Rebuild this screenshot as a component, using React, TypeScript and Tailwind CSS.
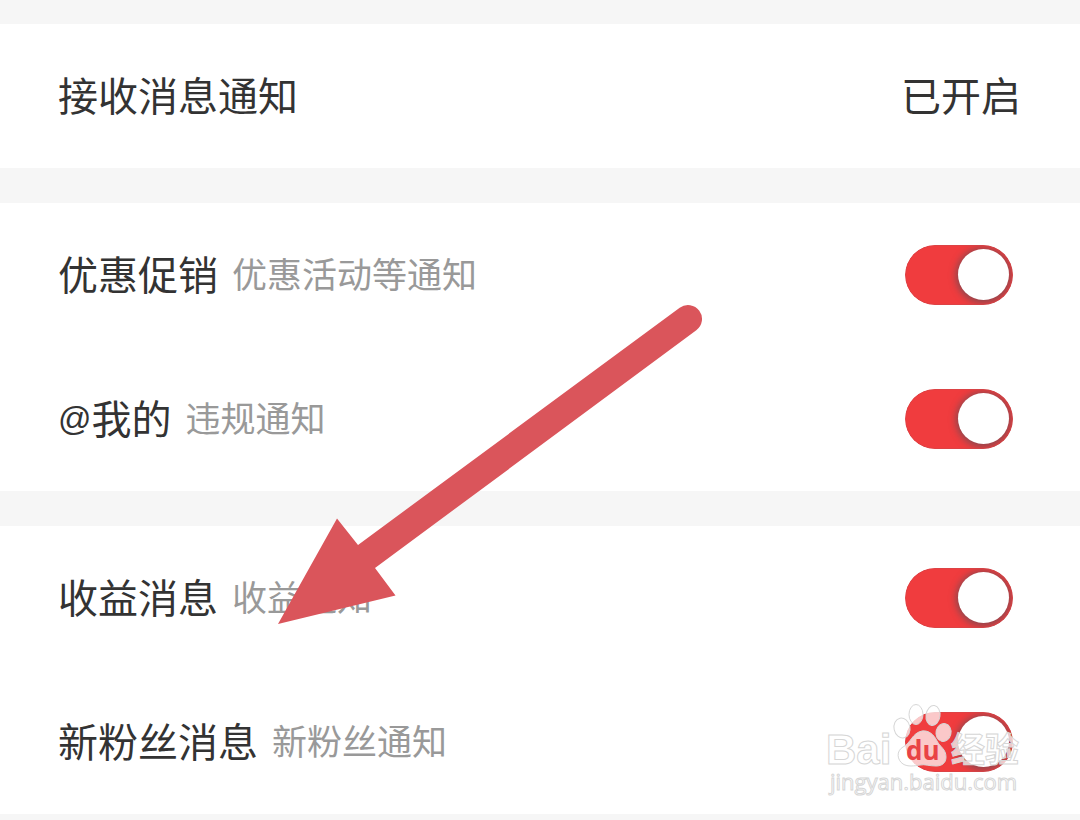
import { useState } from 'react';

interface NotificationItem {
  id: string;
  prefix?: string;
  title: string;
  description: string;
}

const groups: NotificationItem[][] = [
  [
    { id: 'promotion', title: '优惠促销', description: '优惠活动等通知' },
    { id: 'mention', prefix: '@', title: '我的', description: '违规通知' },
  ],
  [
    { id: 'income', title: '收益消息', description: '收益通知' },
    { id: 'fans', title: '新粉丝消息', description: '新粉丝通知' },
  ],
];

interface ToggleProps {
  id: string;
  checked: boolean;
  onChange: (checked: boolean) => void;
}

function Toggle({ id, checked, onChange }: ToggleProps) {
  return (
    <span className="relative mr-2 inline-flex h-[60px] w-[108px] shrink-0 overflow-hidden rounded-full">
      <input
        type="checkbox"
        id={id}
        checked={checked}
        onChange={(e) => onChange(e.target.checked)}
        className="peer h-full w-full cursor-pointer appearance-none rounded-full bg-gray-300 checked:bg-[#f03c3e]"
      />
      <span className="pointer-events-none absolute top-1 left-[5px] size-[51px] rounded-full bg-white shadow-[0_1px_7px_2px_rgba(70,80,90,0.6)] transition-transform peer-checked:translate-x-12" />
      <span className="pointer-events-none absolute inset-0 rounded-full border border-[#d0484b]/60" />
    </span>
  );
}

function Arrow() {
  return (
    <svg
      className="pointer-events-none absolute top-[304px] left-[278px]"
      width="426"
      height="322"
      viewBox="0 0 426 322"
      aria-hidden="true"
    >
      <path
        d="M0 320 L59 214.5 L80 241 L401.7 3.7 A14 14 0 0 1 418.3 26.3 L97 264 L117.5 291.5 Z"
        fill="#da555b"
      />
    </svg>
  );
}

function Watermark() {
  return (
    <svg
      className="pointer-events-none absolute top-[700px] right-[52px]"
      width="204"
      height="100"
      viewBox="0 0 204 100"
      aria-hidden="true"
    >
      <g fill="#ffffff" fillOpacity="0.72" stroke="#d6d6d6" strokeWidth="1">
        <ellipse cx="78" cy="28" rx="8" ry="10" transform="rotate(-12 78 28)" />
        <ellipse cx="92" cy="14.5" rx="7" ry="10" />
        <ellipse cx="109" cy="15.5" rx="7" ry="10" transform="rotate(8 109 15.5)" />
        <ellipse cx="119.5" cy="32.5" rx="7.5" ry="9" transform="rotate(12 119.5 32.5)" />
        <path d="M98 31 C105 30 110 35 113 41 C116 47 122 49 122 57 C122 63 118 66 112 66 C105 66 101 64 96 65 C90 66 84 67 79 64 C73 60 72 51 79 47 C87 43 88 33 98 31 Z" />
        <text x="2" y="64" className="font-['Liberation_Sans',sans-serif] text-[42px] font-bold">
          Bai
        </text>
        <text x="127" y="62" className="font-['Noto_Sans_CJK_SC',sans-serif] text-[34px] font-bold">
          经验
        </text>
        <text x="6" y="90" className="font-['Open_Sans',sans-serif] text-[22px]">
          jingyan.baidu.com
        </text>
      </g>
      <text x="82" y="60" fill="#e94245" className="font-['Open_Sans',sans-serif] text-[26px] font-bold">
        du
      </text>
    </svg>
  );
}

export default function App() {
  const [enabled, setEnabled] = useState<Record<string, boolean>>({
    promotion: true,
    mention: true,
    income: true,
    fans: true,
  });

  const handleToggle = (id: string, checked: boolean) => {
    setEnabled({ ...enabled, [id]: checked });
  };

  return (
    <main className="relative flex min-h-screen flex-col gap-[35px] overflow-hidden bg-[#f6f6f6] pt-6 font-['Open_Sans','Noto_Sans_CJK_SC',sans-serif] text-[#333333]">
      <section className="flex h-36 items-center justify-between bg-white pr-[59px] pl-[58px] text-[40px]">
        <h1>接收消息通知</h1>
        <span>已开启</span>
      </section>

      {groups.map((items, index) => (
        <section key={index} className="bg-white">
          {items.map((item) => (
            <div key={item.id} className="flex h-36 items-center justify-between pr-[59px] pl-[58px]">
              <label htmlFor={item.id} className="flex items-center gap-3.5">
                <span className="flex items-center text-[40px]">
                  {item.prefix && (
                    <span className="font-['Liberation_Sans',sans-serif] text-[33px]">{item.prefix}</span>
                  )}
                  {item.title}
                </span>
                <span className="text-[35px] text-[#999999]">{item.description}</span>
              </label>
              <Toggle
                id={item.id}
                checked={enabled[item.id]}
                onChange={(checked) => handleToggle(item.id, checked)}
              />
            </div>
          ))}
        </section>
      ))}

      <Arrow />
      <Watermark />
    </main>
  );
}
